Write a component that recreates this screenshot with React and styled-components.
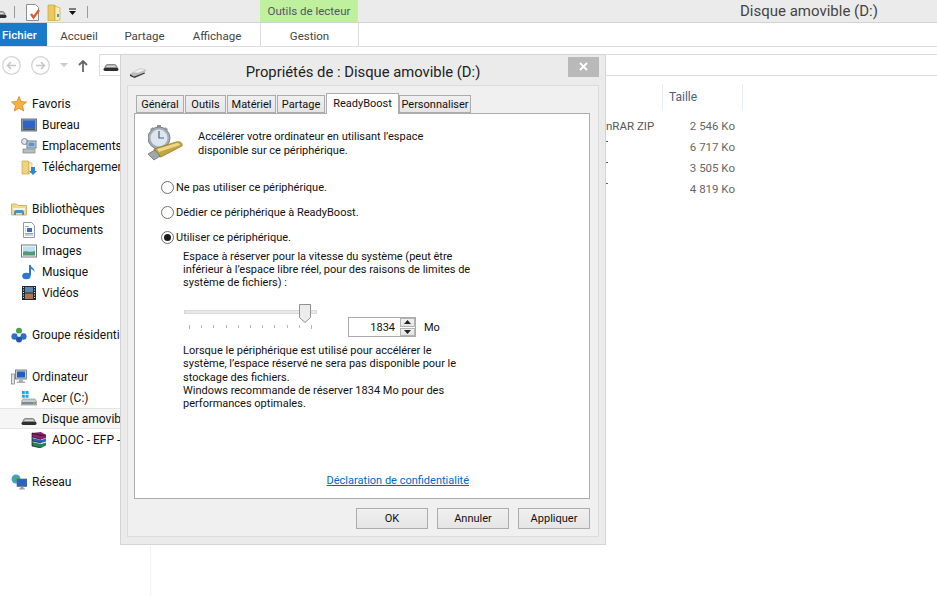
import React from "react";
import styled, { createGlobalStyle } from "styled-components";

const Global = createGlobalStyle`
  html, body { margin: 0; padding: 0; background: #fff; }
  body { font-family: Roboto, "Noto Sans", "Liberation Sans", sans-serif; font-size: 12px; color: #111; }
  * { box-sizing: border-box; }
`;

const Page = styled.div`
  position: relative; width: 937px; height: 596px; overflow: hidden; background: #fff;
  display: flex; flex-direction: column;
`;
const TitleBar = styled.div`
  display: flex; height: 23px; flex: none; background: #ebebeb; border-bottom: 1px solid #d2d2d2;
`;
const QuickAccess = styled.div`
  width: 260px; display: flex; align-items: center; position: relative; overflow: hidden; padding-top: 2px;
`;
const QuickSep = styled.span`
  width: 1px; height: 12px; background: #9a9a9a; flex: none; margin: ${p => p.$m || "0"};
`;
const ToolsHeader = styled.div`
  width: 98px; height: 22px; background: #bef09e; color: #556; font-size: 11.5px;
  display: flex; align-items: center; justify-content: center;
`;
const WindowTitle = styled.div`
  margin-left: 382px; font-size: 15px; color: #444; line-height: 22px; white-space: nowrap;
`;
const RibbonTabs = styled.div`
  display: flex; height: 24px; flex: none; background: #fff; border-bottom: 1px solid #dedede;
`;
const FileTab = styled.div`
  width: 47px; height: 23px; background: #1979ca; color: #fff; font-size: 11.5px; font-weight: 500;
  padding-left: 2px; line-height: 25px;
`;
const RibbonTab = styled.div`
  width: ${p => p.$w}px; text-align: center; color: #444; font-size: 11.5px; line-height: 26px;
`;
const ContextTab = styled.div`
  margin-left: 4px; width: 99px; text-align: center; color: #444; font-size: 11.5px; line-height: 26px;
  border-left: 1px solid #dcdcdc; border-right: 1px solid #dcdcdc;
`;
const NavRow = styled.div`
  display: flex; height: 22px; flex: none; margin-top: 7px;
`;
const NavButtons = styled.div`
  width: 99px; flex: none; display: flex; align-items: center; padding-left: 2px;
`;
const AddressBox = styled.div`
  flex: 1; border: 1px solid #dcdcdc; border-right: 0; display: flex; align-items: center; padding-left: 3px;
`;
const Body = styled.div`
  flex: 1; display: flex; min-height: 0;
`;
const Sidebar = styled.div`
  width: 151px; flex: none; padding-top: 17px; border-right: 1px solid #f2f2f2;
`;
const TreeGroup = styled.div`
  margin-bottom: 21px;
`;
const TreeRow = styled.div`
  height: 21px; display: flex; align-items: center; gap: 5px; white-space: nowrap; overflow: hidden;
  padding-left: ${p => 11 + p.$level * 10}px; font-size: 12px; color: #111;
  background: ${p => (p.$selected ? "#f6f6f6" : "transparent")};
  border-top: 1px solid ${p => (p.$selected ? "#e4e4e4" : "transparent")};
  border-bottom: 1px solid ${p => (p.$selected ? "#e4e4e4" : "transparent")};
`;
const FileArea = styled.div`
  flex: 1; padding-top: 8px;
`;
const FileHeader = styled.div`
  display: grid; grid-template-columns: 511px 81px; height: 20px; margin-bottom: 12px;
`;
const HeaderCell = styled.div`
  grid-column: 2; border-left: 1px solid #e4edf6; border-right: 1px solid #e4edf6;
  padding-left: 6px; color: #4c607a; font-size: 12px; line-height: 26px;
`;
const FileRow = styled.div`
  display: grid; grid-template-columns: 455px 56px 73px; height: 21px; line-height: 21px; font-size: 11.5px; color: #666;
`;
const TypeCell = styled.div`
  grid-column: 2; white-space: nowrap; overflow: hidden; color: #555; position: relative;
`;
const TypeTick = styled.span`
  display: block; width: 2px; height: 1px; background: #666; margin-top: 4px;
`;
const SizeCell = styled.div`
  grid-column: 3; text-align: right; white-space: nowrap;
`;

const Dialog = styled.div`
  position: absolute; left: 120px; top: 54px; width: 486px; height: 491px;
  background: #ebebeb; border: 1px solid #d4d4d4; display: flex; flex-direction: column; padding: 0 6px 7px;
`;
const DialogHead = styled.div`
  height: 30px; flex: none; display: grid; grid-template-columns: 1fr auto 1fr; align-items: center;
`;
const DialogIcon = styled.div`
  padding-left: 2px; padding-top: 5px;
`;
const DialogTitle = styled.div`
  font-size: 14.8px; color: #222; white-space: nowrap; padding-top: 3px;
`;
const CloseButton = styled.div`
  justify-self: end; width: 31px; height: 20px; margin: -7px 0 0 0; background: #b9b9b9;
  display: flex; align-items: center; justify-content: center;
`;
const Client = styled.div`
  flex: 1; background: #f0f0f0; border: 1px solid #dcdcdc; padding: 7px 8px 0 6px; display: flex; flex-direction: column;
`;
const TabStrip = styled.div`
  height: 20px; flex: none; display: flex; align-items: flex-end; padding-left: 2px; position: relative; z-index: 1;
`;
const Tab = styled.div`
  height: ${p => (p.$active ? 21 : 18)}px; width: ${p => p.$w}px; flex: none;
  margin-right: ${p => (p.$active ? 0 : 1)}px; margin-bottom: ${p => (p.$active ? -1 : 0)}px;
  border: 1px solid #acacac; border-bottom: ${p => (p.$active ? "0" : "1px solid #acacac")};
  background: ${p => (p.$active ? "#fff" : "linear-gradient(#f0f0f0,#e5e5e5)")};
  font-size: 11px; text-align: center; white-space: nowrap; color: #111;
  line-height: ${p => (p.$active ? 19 : 18)}px;
`;
const Panel = styled.div`
  width: 456px; height: 386px; flex: none; background: #fff; border: 1px solid #acacac; display: flex; flex-direction: column;
  padding-left: 26px;
`;
const Intro = styled.div`
  display: flex; margin: 11px 0 0 -13px; height: 36px;
`;
const IntroIcon = styled.div`
  width: 50px; flex: none;
`;
const BodyText = styled.div`
  font-size: 11px; line-height: ${p => p.$lh || 14}px; color: #111; white-space: nowrap;
  margin-top: ${p => p.$mt || 0}px;
`;
const RadioRow = styled.label`
  display: flex; align-items: center; gap: 2px; height: 15px; margin-top: ${p => p.$mt}px; font-size: 11px; white-space: nowrap;
`;
const RadioDot = styled.span`
  width: 13px; height: 13px; border-radius: 50%; border: 1px solid #6e6e6e; background: #fff; flex: none;
  display: flex; align-items: center; justify-content: center;
  &::after { content: ""; width: 7px; height: 7px; border-radius: 50%; background: ${p => (p.$on ? "#1c1c1c" : "transparent")}; }
`;
const Indented = styled.div`
  margin-left: 22px;
`;
const SliderRow = styled.div`
  display: flex; height: 34px; margin: 17px 0 0 1px;
`;
const SliderBlock = styled.div`
  width: 164px; flex: none; position: relative;
`;
const Track = styled.div`
  width: 133px; height: 4px; margin-top: 4px; background: #e7eaea; border: 1px solid #d8d8d8;
`;
const Thumb = styled.div`
  position: absolute; left: 115px; top: -2px; width: 12px; height: 19px;
`;
const Ticks = styled.div`
  display: flex; margin: 11px 0 0 5px; width: 123px; justify-content: space-between;
`;
const Tick = styled.span`
  width: 1px; height: ${p => (p.$long ? 4 : 3)}px; background: #b8b8b8;
`;
const SpinBox = styled.div`
  width: 68px; height: 20px; border: 1px solid #ababab; margin-top: 11px; display: flex; align-items: center; justify-content: flex-end; flex: none;
  font-size: 11px; background: #fff;
`;
const SpinValue = styled.span`
  padding-right: 5px;
`;
const SpinButtons = styled.div`
  width: 15px; height: 18px; display: flex; flex-direction: column; gap: 1px; flex: none;
`;
const SpinButton = styled.div`
  flex: 1; background: linear-gradient(#f1f1f1,#e2e2e2); border: 1px solid #b4b4b4; display: flex; align-items: center; justify-content: center;
`;
const SpinUnit = styled.span`
  margin: 13px 0 0 8px; font-size: 11px; line-height: 18px;
`;
const LinkRow = styled.div`
  margin-top: auto; padding: 0 120px 10px 0; text-align: right;
`;
const PrivacyLink = styled.a`
  color: #0066cc; text-decoration: underline; font-size: 11px; line-height: 15px; cursor: pointer;
`;
const ButtonRow = styled.div`
  display: flex; justify-content: flex-end; gap: 9px; margin-top: 9px;
`;
const DialogButton = styled.button`
  width: 72px; height: 21px; padding: 0; font: inherit; font-size: 11px; color: #111;
  border: 1px solid #acacac; background: linear-gradient(#f0f0f0,#e5e5e5);
`;
const Spaced = styled.span`
  display: block; flex: none; margin-left: ${p => p.$l || 0}px;
`;

const Svg = ({ children, w = 16, h = 16 }) => (
  <svg width={w} height={h} viewBox={`0 0 ${w} ${h}`} style={{ flex: "none", display: "block" }}>{children}</svg>
);

const UsbDrive = () => (
  <Svg>
    <path d="M1 12c.3-3 2-5 4-5h6c2 0 3.700 2 4 5z" fill="#8a8a8a" />
    <path d="M4 8.400h8l1 1.600H3z" fill="#d8d8d8" />
    <rect x="0.500" y="11" width="15" height="3" rx="1.400" fill="#2e2e2e" />
  </Svg>
);
const DialogDrive = () => (
  <Svg w={18} h={11}>
    <path d="M1 7L11 1.500l6 1.500-1.500 2.500L5 9.500z" fill="#bdbdbd" />
    <path d="M11 1.500l6 1.500-8 3-6-.5z" fill="#efefef" stroke="#b0b0b0" strokeWidth=".4" />
    <path d="M1 7l4 2.500 10.500-4 .5 1L5.500 11 1 9z" fill="#3a3a3a" />
  </Svg>
);
const Star = () => (
  <Svg>
    <path d="M8 .5l2.200 5 5.300.5-4 3.600 1.200 5.400L8 12.200 3.300 15l1.200-5.400-4-3.600 5.300-.5z" fill="#f7b23b" stroke="#d9822b" strokeWidth=".8" />
  </Svg>
);
const Desktop = () => (
  <Svg>
    <rect x=".5" y="2" width="15" height="12" fill="#8b9aaa" stroke="#6c7a88" />
    <rect x="2" y="3.500" width="12" height="8" fill="#2f63c4" />
    <rect x="2" y="11.500" width="12" height="1.500" fill="#44566b" />
  </Svg>
);
const Places = () => (
  <Svg>
    <circle cx="3.500" cy="3.500" r="3" fill="#dfe6ea" stroke="#7e8b96" />
    <rect x="6" y="3" width="9" height="7" fill="#cfd8de" stroke="#6d7a84" />
    <rect x="7.500" y="4.500" width="6" height="4" fill="#5c94cf" />
    <rect x="2" y="11" width="12" height="4" fill="#b8bfc4" stroke="#7d858b" strokeWidth=".7" />
  </Svg>
);
const FolderDown = () => (
  <Svg>
    <path d="M1 2h6l1 1v12H1z" fill="#f0d37c" stroke="#c6a451" strokeWidth=".7" />
    <path d="M8 3l3 1v8l-3 3z" fill="#fbeec0" stroke="#c6a451" strokeWidth=".5" />
    <path d="M10 8h4v4h2l-4 4-4-4h2z" fill="#2b86dc" />
  </Svg>
);
const LibraryFolder = () => (
  <Svg>
    <path d="M.5 3h5l1.500 1.500h8.500V14H.5z" fill="#f0d88e" stroke="#c7a65a" strokeWidth=".8" />
    <path d="M2 7h12v2H2z" fill="#fdf5d8" />
    <path d="M3 14v-3c0-1 1-2 2-2h6c1 0 2 1 2 2v3h-2v-2H5v2z" fill="#4d8fc7" />
  </Svg>
);
const Doc = () => (
  <Svg>
    <path d="M2.500.5h8l3 3v12h-11z" fill="#fff" stroke="#8f9aa6" />
    <rect x="6" y="6" width="5" height="4" fill="#3b6fb4" />
    <path d="M4 4.500h4M4 11.500h8M4 13h8M4 7h1M4 9h1" stroke="#8fa3b8" />
  </Svg>
);
const ImagesIcon = () => (
  <Svg>
    <rect x=".5" y="2" width="15" height="12" fill="#fff" stroke="#6f7a82" />
    <rect x="2" y="3.500" width="12" height="9" fill="#bfe0f2" />
    <path d="M2 12.500V9c3-2 6 1 12-1v4.500z" fill="#4d9a74" />
  </Svg>
);
const Music = () => (
  <Svg>
    <path d="M9 1v10.500" stroke="#1f66b8" strokeWidth="1.800" />
    <ellipse cx="5.400" cy="12" rx="4.200" ry="3.200" fill="#2a7ad0" />
    <path d="M9.500 1c.5 2.800 4.500 3 4 7-.8-2-2.500-2.600-4-3z" fill="#2f80d8" />
  </Svg>
);
const Film = () => (
  <Svg>
    <rect x="1" y="1" width="14" height="14" fill="#1c2b38" />
    <rect x="4" y="2" width="8" height="5.500" fill="#5c88b0" />
    <rect x="4" y="8.500" width="8" height="5.500" fill="#b4744a" />
    <path d="M2 2.500h1M2 5h1M2 7.500h1M2 10h1M2 12.500h1M13 2.500h1M13 5h1M13 7.500h1M13 10h1M13 12.500h1" stroke="#dfe6ea" />
  </Svg>
);
const Homegroup = () => (
  <Svg>
    <circle cx="8" cy="3.800" r="3" fill="#4aa04a" />
    <circle cx="3.600" cy="9.500" r="3.200" fill="#2f6fc8" />
    <circle cx="12.400" cy="9.500" r="3.200" fill="#2f6fc8" />
    <circle cx="8" cy="12.500" r="3" fill="#2456a8" />
    <circle cx="8" cy="8" r="1.800" fill="#e8f0f8" />
  </Svg>
);
const Computer = () => (
  <Svg>
    <rect x=".5" y="5" width="3" height="10" fill="#dfe3e6" stroke="#707a82" strokeWidth=".7" />
    <rect x="4.500" y="1" width="11" height="9" fill="#c7ced4" stroke="#667079" strokeWidth=".8" />
    <rect x="6" y="2.500" width="8" height="6" fill="#1d5fc4" />
    <path d="M8 10.500h4v2h2v1.500H6v-1.500h2z" fill="#a7aeb4" />
  </Svg>
);
const WinDrive = () => (
  <Svg>
    <path d="M1 1h2.800v3H1zM4.500 1h3v3h-3zM1 4.700h2.800v3H1zM4.500 4.700h3v3h-3z" fill="#16a8ea" />
    <path d="M2 9h12l2 3v3H0v-3z" fill="#c3cad0" stroke="#7d878f" strokeWidth=".6" />
    <rect x="1" y="12" width="14" height="2.300" fill="#7f8a92" />
    <rect x="12" y="12.500" width="2" height="1" fill="#7ce05a" />
  </Svg>
);
const RarBooks = () => (
  <Svg>
    <path d="M1 1l9-1 5 3v3l-5 1.500L1 5z" fill="#8c1f6e" />
    <path d="M1 6l9 2 5-1.500v3L10 11 1 9z" fill="#2d5fb8" />
    <path d="M1 10l9 2 5-1.500v3L10 16l-9-2z" fill="#25815a" />
    <path d="M1 5l9 2.500M1 9l9 2M1 14l9 2M1 1l9 2.500 5-.5M1 1v13" stroke="#111" strokeWidth=".7" fill="none" />
  </Svg>
);
const Network = () => (
  <Svg>
    <circle cx="5" cy="5" r="4.500" fill="#3f9fd8" />
    <path d="M2 3.500c2-1.500 3 1 5-1l1 3c-2 0-2 2-4 2z" fill="#4fae4f" />
    <rect x="6" y="5" width="10" height="7.500" fill="#2a63c0" stroke="#5f6b75" strokeWidth=".7" />
    <path d="M9.500 12.500h3v2h1.500v1H8v-1h1.500z" fill="#8f989f" />
  </Svg>
);
const ReadyBoostIcon = () => (
  <Svg w={37} h={37}>
    <rect x="9" y="0" width="4" height="3" fill="#8b8f92" />
    <path d="M2 4l3-2 2 3-3 2zM20 4l-3-2-2 3 3 2z" fill="#9ba0a4" />
    <circle cx="11" cy="13" r="11" fill="#a5adb3" stroke="#7c858c" />
    <circle cx="11" cy="13" r="8.500" fill="#dce6ee" />
    <path d="M11 6v7h5" stroke="#56626c" strokeWidth="1.200" fill="none" />
    <path d="M6 24l22-7c4-1 7 1 6 4L13 32l-5-1z" fill="#c4a43c" stroke="#8e7527" strokeWidth=".7" />
    <path d="M9 24l20-6c2 0 3 1 3 2l-21 7z" fill="#ecd98a" />
    <path d="M0 29l7-4 5 6-6 4z" fill="#a3a7aa" stroke="#5f6468" strokeWidth=".7" />
  </Svg>
);
const CircleArrow = ({ dir }) => (
  <Svg w={19} h={19}>
    <circle cx="9.500" cy="9.500" r="8.800" fill="none" stroke="#d2d2d2" strokeWidth="1.200" />
    <path d={dir === "l" ? "M14 9.500H6M9 6L5.500 9.500 9 13" : "M5 9.500h8M10 6l3.500 3.500L10 13"} fill="none" stroke="#c6c6c6" strokeWidth="1.600" />
  </Svg>
);

const sidebar = [
  [
    [0, "Favoris", Star],
    [1, "Bureau", Desktop],
    [1, "Emplacements récents", Places],
    [1, "Téléchargements", FolderDown],
  ],
  [
    [0, "Bibliothèques", LibraryFolder],
    [1, "Documents", Doc],
    [1, "Images", ImagesIcon],
    [1, "Musique", Music],
    [1, "Vidéos", Film],
  ],
  [[0, "Groupe résidentiel", Homegroup]],
  [
    [0, "Ordinateur", Computer],
    [1, "Acer (C:)", WinDrive],
    [1, "Disque amovible (D:)", UsbDrive, true],
    [2, "ADOC - EFP - 2013", RarBooks],
  ],
  [[0, "Réseau", Network]],
];

const files = [
  { type: "nRAR ZIP", size: "2 546 Ko" },
  { size: "6 717 Ko" },
  { size: "3 505 Ko" },
  { size: "4 819 Ko" },
];

const tabs = [
  ["Général", 48], ["Outils", 41], ["Matériel", 49], ["Partage", 48],
  ["ReadyBoost", 73, true], ["Personnaliser", 72],
];

export default function App() {
  return (
    <Page>
      <Global />
      <TitleBar>
        <QuickAccess>
          <Spaced $l={-9}><UsbDrive /></Spaced>
          <QuickSep $m="0 10px 0 7px" />
          <Svg w={16} h={17}>
            <path d="M1.500.5h9l3 3v13h-12z" fill="#fff" stroke="#8a8f94" />
            <path d="M6 10l2.500 3.500L14 6" fill="none" stroke="#e2572b" strokeWidth="2.200" />
          </Svg>
          <Spaced $l={6}>
            <Svg w={14} h={17}>
              <path d="M1 1h7v16H1z" fill="#ecc95f" stroke="#c59b3c" strokeWidth=".6" />
              <path d="M8 2l5 2v12l-5 1z" fill="#fbeeb0" stroke="#c59b3c" strokeWidth=".6" />
              <path d="M10 10h2v3h-2z" fill="#3c9ad6" />
            </Svg>
          </Spaced>
          <Spaced $l={8}>
            <Svg w={8} h={8}>
              <path d="M0 1h7" stroke="#111" />
              <path d="M0 3h7L3.500 7z" fill="#111" />
            </Svg>
          </Spaced>
          <QuickSep $m="0 0 0 10px" />
        </QuickAccess>
        <ToolsHeader>Outils de lecteur</ToolsHeader>
        <WindowTitle>Disque amovible (D:)</WindowTitle>
      </TitleBar>
      <RibbonTabs>
        <FileTab>Fichier</FileTab>
        <RibbonTab $w={64}>Accueil</RibbonTab>
        <RibbonTab $w={67}>Partage</RibbonTab>
        <RibbonTab $w={78}>Affichage</RibbonTab>
        <ContextTab>Gestion</ContextTab>
      </RibbonTabs>
      <NavRow>
        <NavButtons>
          <CircleArrow dir="l" />
          <Spaced $l={10}><CircleArrow dir="r" /></Spaced>
          <Spaced $l={10}>
            <Svg w={8} h={5}><path d="M0 0h8L4 4z" fill="#c9c9c9" /></Svg>
          </Spaced>
          <Spaced $l={10}>
            <Svg w={10} h={13}><path d="M5 13V2M1 6l4-4 4 4" fill="none" stroke="#666" strokeWidth="1.800" /></Svg>
          </Spaced>
        </NavButtons>
        <AddressBox><UsbDrive /></AddressBox>
      </NavRow>
      <Body>
        <Sidebar>
          {sidebar.map((group, i) => (
            <TreeGroup key={i}>
              {group.map(([level, label, Icon, selected]) => (
                <TreeRow key={label} $level={level} $selected={selected}>
                  <Icon />
                  {label}
                </TreeRow>
              ))}
            </TreeGroup>
          ))}
        </Sidebar>
        <FileArea>
          <FileHeader>
            <HeaderCell>Taille</HeaderCell>
          </FileHeader>
          {files.map(f => (
            <FileRow key={f.size}>
              <TypeCell>{f.type || <TypeTick />}</TypeCell>
              <SizeCell>{f.size}</SizeCell>
            </FileRow>
          ))}
        </FileArea>
      </Body>

      <Dialog>
        <DialogHead>
          <DialogIcon><DialogDrive /></DialogIcon>
          <DialogTitle>Propriétés de : Disque amovible (D:)</DialogTitle>
          <CloseButton>
            <Svg w={9} h={9}><path d="M1 1l7 7M8 1L1 8" stroke="#fff" strokeWidth="1.800" /></Svg>
          </CloseButton>
        </DialogHead>
        <Client>
          <TabStrip>
            {tabs.map(([label, w, active]) => (
              <Tab key={label} $w={w} $active={active}>{label}</Tab>
            ))}
          </TabStrip>
          <Panel>
            <Intro>
              <IntroIcon><ReadyBoostIcon /></IntroIcon>
              <BodyText $lh={14} $mt={5}>
                Accélérer votre ordinateur en utilisant l’espace<br />
                disponible sur ce périphérique.
              </BodyText>
            </Intro>
            <RadioRow $mt={19}><RadioDot />Ne pas utiliser ce périphérique.</RadioRow>
            <RadioRow $mt={10}><RadioDot />Dédier ce périphérique à ReadyBoost.</RadioRow>
            <RadioRow $mt={10}><RadioDot $on />Utiliser ce périphérique.</RadioRow>
            <Indented>
              <BodyText $lh={13} $mt={5}>
                Espace à réserver pour la vitesse du système (peut être<br />
                inférieur à l’espace libre réel, pour des raisons de limites de<br />
                système de fichiers) :
              </BodyText>
              <SliderRow>
                <SliderBlock>
                  <Track />
                  <Thumb>
                    <Svg w={12} h={19}>
                      <path d="M.5.500h11v13L6 18.500.5 13.500z" fill="#ececec" stroke="#8f8f8f" />
                    </Svg>
                  </Thumb>
                  <Ticks>
                    {Array.from({ length: 11 }, (_, i) => <Tick key={i} $long={i === 0 || i === 10} />)}
                  </Ticks>
                </SliderBlock>
                <SpinBox>
                  <SpinValue>1834</SpinValue>
                  <SpinButtons>
                    <SpinButton><Svg w={7} h={4}><path d="M3.500 0L7 4H0z" fill="#222" /></Svg></SpinButton>
                    <SpinButton><Svg w={7} h={4}><path d="M0 0h7L3.500 4z" fill="#222" /></Svg></SpinButton>
                  </SpinButtons>
                </SpinBox>
                <SpinUnit>Mo</SpinUnit>
              </SliderRow>
              <BodyText $lh={13.300} $mt={4}>
                Lorsque le périphérique est utilisé pour accélérer le<br />
                système, l’espace réservé ne sera pas disponible pour le<br />
                stockage des fichiers.<br />
                Windows recommande de réserver 1834 Mo pour des<br />
                performances optimales.
              </BodyText>
            </Indented>
            <LinkRow><PrivacyLink>Déclaration de confidentialité</PrivacyLink></LinkRow>
          </Panel>
          <ButtonRow>
            <DialogButton>OK</DialogButton>
            <DialogButton>Annuler</DialogButton>
            <DialogButton>Appliquer</DialogButton>
          </ButtonRow>
        </Client>
      </Dialog>
    </Page>
  );
}
